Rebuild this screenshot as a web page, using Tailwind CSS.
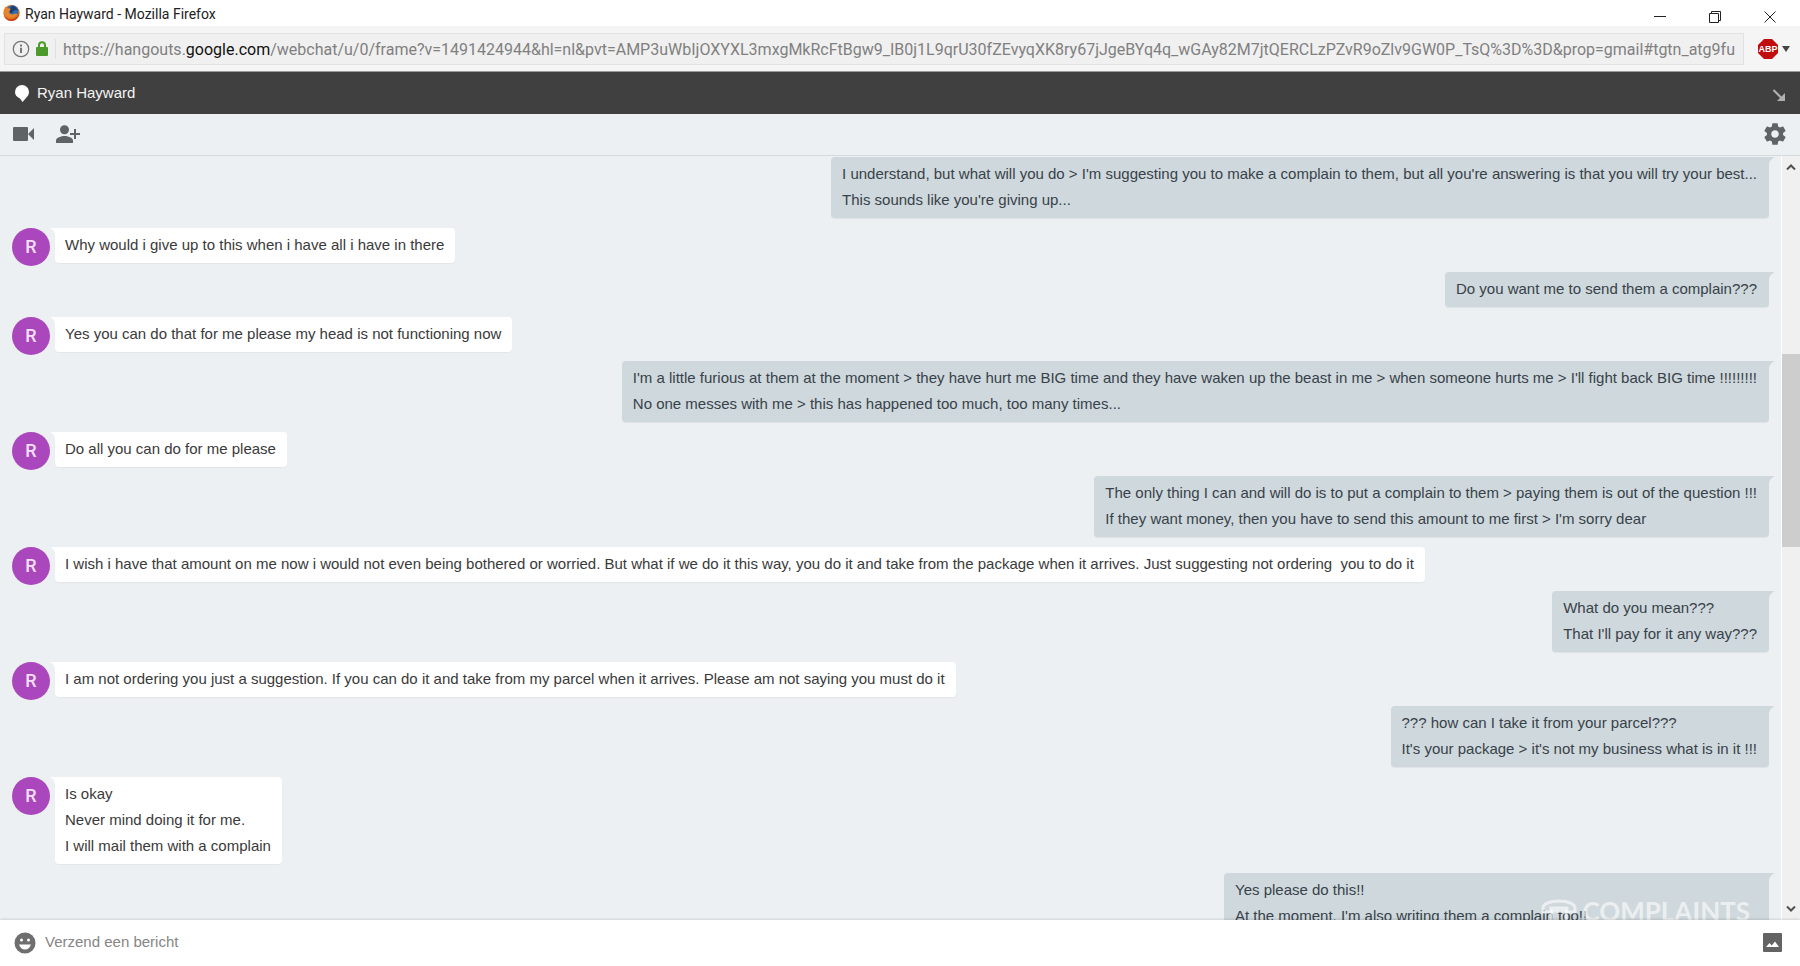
<!DOCTYPE html>
<html lang="nl">
<head>
    <meta charset="UTF-8">
    <meta name="viewport" content="width=device-width, initial-scale=1.0">
    <title>Ryan Hayward</title>
    <script src="https://cdn.jsdelivr.net/npm/@tailwindcss/browser@4"></script>
</head>
<body class="h-screen flex flex-col overflow-hidden bg-white font-['Liberation_Sans',Arial,sans-serif]">
    <!-- Window title bar -->
    <header class="flex h-[26px] shrink-0 items-center justify-between pl-[3px] pr-6 font-['Roboto',sans-serif]">
        <div class="flex items-center gap-[5px]">
            <svg class="h-[18px] w-[17px]" viewBox="0 0 18 18">
                <circle cx="9" cy="9" r="8.6" fill="#e2711d"/>
                <circle cx="10" cy="7.2" r="6.4" fill="#2f6fb0"/>
                <path d="M9 1.5c3.500 0 6 2 6.500 5-1.500-1-3-1-4 0s-1.500 2.500-3 2.500S6 6 9 1.500z" fill="#1c3f73"/>
                <path d="M1 5.500C2 4 2.500 3 2.700 2c1 1 1.600 1.700 2.800 2 1.500 0 2.500.500 2.500 1.200C7.500 6.500 6.500 6.800 6.200 8c.8 2.500 3.800 3.500 6.300 1.800 2-.8 3.500.2 2.300 1.700C12 15.500 3.500 14.500 1.500 10z" fill="#e8842c"/>
                <path d="M17 6c1 5-1.500 10.500-7.500 11.500C5 17.900 2 15 1 12c2.500 3.500 7.500 4.800 11.500 2.500C16 12.500 17.200 9.500 17 6z" fill="#c9431b"/>
            </svg>
            <h1 class="pt-px text-sm leading-4 text-[#222]">Ryan Hayward - Mozilla Firefox</h1>
        </div>
        <div class="flex items-center gap-[43px] pt-2">
            <button type="button" aria-label="Minimaliseren"><svg class="h-3 w-3" viewBox="0 0 12 12"><path d="M0 5.500h12" stroke="#222"/></svg></button>
            <button type="button" aria-label="Herstellen"><svg class="h-3 w-3" viewBox="0 0 12 12" fill="none" stroke="#222"><path d="M.5 2.500h9v9h-9zM2.500 2.500v-2h9v9h-2"/></svg></button>
            <button type="button" aria-label="Sluiten"><svg class="h-3 w-3" viewBox="0 0 12 12"><path d="M.5.500l11 11M11.500.500l-11 11" stroke="#222"/></svg></button>
        </div>
    </header>

    <!-- Address bar -->
    <div class="flex h-[46px] shrink-0 items-center border-b border-[#9a9a9a] bg-[#f5f5f5] pl-1 pr-[10px] font-['Roboto',sans-serif]">
        <div class="flex h-8 min-w-0 flex-1 items-center border border-[#e2e2e2] bg-[#f0f0f0] pl-[7px] pr-1">
            <svg class="h-[18px] w-[18px] shrink-0" viewBox="0 0 18 18" fill="none" stroke="#777">
                <circle cx="9" cy="9" r="7.700" stroke-width="1.300"/>
                <path d="M9 7.700V13" stroke-width="2"/>
                <path d="M9 4.500v2" stroke-width="2"/>
            </svg>
            <svg class="ml-[6px] h-[15px] w-3 shrink-0" viewBox="0 0 12 15">
                <path d="M3 7V4.200a3 3 0 0 1 6 0V7" fill="none" stroke="#4b9a2b" stroke-width="2"/>
                <rect y="6" width="12" height="9" rx="1" fill="#4b9a2b"/>
            </svg>
            <span class="mx-[7px] h-5 w-px shrink-0 bg-[#e0e0e0]"></span>
            <p class="min-w-0 overflow-hidden whitespace-nowrap pt-[2px] text-base leading-6 text-[#808080]">https://hangouts.<span class="text-[#111]">google.com</span>/webchat/u/0/frame?v=1491424944&amp;hl=nl&amp;pvt=AMP3uWbIjOXYXL3mxgMkRcFtBgw9_IB0j1L9qrU30fZEvyqXK8ry67jJgeBYq4q_wGAy82M7jtQERCLzPZvR9oZlv9GW0P_TsQ%3D%3D&amp;prop=gmail#tgtn_atg9fu</p>
        </div>
        <button type="button" class="ml-[14px] flex items-center gap-1" aria-label="Adblock Plus">
            <svg class="h-5 w-5" viewBox="0 0 20 20">
                <path d="M6 0h8l6 6v8l-6 6H6l-6-6V6z" fill="#c10d0d"/>
                <text x="10" y="13" text-anchor="middle" font-size="9" font-weight="700" fill="#fff" font-family="Liberation Sans">ABP</text>
            </svg>
            <svg class="h-[6px] w-2" viewBox="0 0 8 6"><path d="M0 0h8L4 6z" fill="#444"/></svg>
        </button>
    </div>

    <!-- Conversation title -->
    <div class="flex h-[42px] shrink-0 items-center justify-between bg-[#404040] pl-[15px] pr-[15px]">
        <div class="flex items-center gap-2">
            <svg class="h-[17px] w-[14px]" viewBox="0 0 14 17"><path d="M7 0a7 7 0 0 1 7 7c0 3-1.500 4.500-3 6l-3.500 4-2.500-3.500C2 12 0 10.500 0 7a7 7 0 0 1 7-7z" fill="#fff"/></svg>
            <h2 class="text-[15px] leading-5 text-[#f4f4f4]">Ryan Hayward</h2>
        </div>
        <button type="button" class="pt-1" aria-label="Verkleinen">
            <svg class="h-3 w-3" viewBox="0 0 12 12"><path d="M.5 1l8 8" stroke="#b0b0b0" stroke-width="2"/><path d="M12 4v8H4z" fill="#b0b0b0"/></svg>
        </button>
    </div>

    <!-- Toolbar -->
    <div class="flex h-[42px] shrink-0 items-center justify-between border-b border-[#d5dadd] bg-[#ecf0f3] pb-[2px] pl-[13px] pr-[14px] text-[#5f6365]">
        <div class="flex items-center gap-[22px]">
            <button type="button" aria-label="Videogesprek"><svg class="h-[14px] w-[21px]" viewBox="0 0 21 14" fill="currentColor"><path d="M1 0h13a1 1 0 0 1 1 1v12a1 1 0 0 1-1 1H1a1 1 0 0 1-1-1V1a1 1 0 0 1 1-1zM15 7l6-6v12z"/></svg></button>
            <button type="button" aria-label="Personen toevoegen"><svg class="h-[18px] w-6" viewBox="0 0 24 18" fill="currentColor"><circle cx="8.500" cy="4.700" r="4.500"/><path d="M0 18v-2.500C0 12.500 5.500 11 8.500 11s8.500 1.500 8.500 4.500V18zM18 4h2v4h4v2h-4v4h-2v-4h-4V8h4z"/></svg></button>
        </div>
        <button type="button" aria-label="Instellingen">
            <svg class="h-[26px] w-[26px] -mr-[2px]" viewBox="0 0 24 24" fill="currentColor"><path d="M19.430 12.980c.04-.32.07-.64.07-.98s-.03-.66-.07-.98l2.110-1.650c.19-.15.24-.42.12-.64l-2-3.460c-.12-.22-.39-.3-.61-.22l-2.490 1c-.52-.4-1.080-.73-1.690-.98l-.38-2.650C14.460 2.180 14.250 2 14 2h-4c-.25 0-.46.18-.49.42l-.38 2.650c-.61.25-1.170.59-1.690.98l-2.490-1c-.23-.09-.49 0-.61.22l-2 3.460c-.13.22-.07.49.12.64l2.110 1.650c-.04.32-.07.65-.07.98s.03.66.07.98l-2.110 1.650c-.19.15-.24.42-.12.64l2 3.460c.12.22.39.3.61.22l2.490-1c.52.4 1.080.73 1.690.98l.38 2.650c.03.24.24.42.49.42h4c.25 0 .46-.18.49-.42l.38-2.650c.61-.25 1.170-.59 1.690-.98l2.490 1c.23.09.49 0 .61-.22l2-3.460c.12-.22.07-.49-.12-.64l-2.110-1.650zM12 15.500c-1.930 0-3.500-1.570-3.500-3.500s1.570-3.500 3.500-3.500 3.500 1.570 3.500 3.500-1.570 3.500-3.500 3.500z"/></svg>
        </button>
    </div>

    <!-- Conversation -->
    <main class="relative flex min-h-0 flex-1 bg-[#ecf0f3]">
        <div id="messages" class="min-w-0 flex-1 overflow-hidden pl-3 pr-[6px] pt-px text-[15px] leading-[26px]"></div>

        <!-- Scrollbar -->
        <div class="flex w-[19px] shrink-0 flex-col items-center border-l border-white bg-[#f0f0f0]">
            <svg class="mt-2 h-[6px] w-[10px] shrink-0" viewBox="0 0 10 6"><path d="M1 5.500l4-4 4 4" fill="none" stroke="#505050" stroke-width="2"/></svg>
            <div class="flex w-full flex-1 flex-col py-2">
                <div class="grow-[176]"></div>
                <div class="w-full grow-[192] bg-[#cdcdcd]"></div>
                <div class="grow-[350]"></div>
            </div>
            <svg class="mb-2 h-[6px] w-[10px] shrink-0" viewBox="0 0 10 6"><path d="M1 .5l4 4 4-4" fill="none" stroke="#505050" stroke-width="2"/></svg>
        </div>

        <!-- Watermark -->
        <div class="absolute -bottom-[7px] right-[50px] flex items-center gap-[5px] text-white/60">
            <svg class="h-6 w-9" viewBox="0 0 36 24" fill="none" stroke="currentColor" stroke-width="3"><path d="M2 9c0-4 7-7 16-7s16 3 16 7v4h-8V9H10v4H2z"/><path d="M11 12h14v11H11z"/></svg>
            <span class="font-['Lato',sans-serif] text-[26px] font-bold leading-8">COMPLAINTS</span>
        </div>
    </main>

    <!-- Message box -->
    <footer class="relative flex h-[46px] shrink-0 items-center bg-white pb-px pl-[14px] pr-[18px] shadow-[0_-1px_2px_rgba(0,0,0,0.12)]">
        <button type="button" aria-label="Emoji"><svg class="h-[22px] w-[22px]" viewBox="0 0 22 22"><circle cx="11" cy="11" r="10.500" fill="#6e6e6e"/><circle cx="7.500" cy="8" r="1.500" fill="#fff"/><circle cx="14.500" cy="8" r="1.500" fill="#fff"/><path d="M5 12.500h12c-1 3-3.200 5-6 5s-5-2-6-5z" fill="#fff"/></svg></button>
        <input type="text" aria-label="Verzend een bericht" placeholder="Verzend een bericht" class="ml-[9px] min-w-0 flex-1 pb-[2px] text-[15px] leading-6 outline-none placeholder:text-[#858585]">
        <button type="button" aria-label="Foto toevoegen"><svg class="h-[19px] w-[19px]" viewBox="0 0 19 19"><rect width="19" height="19" rx="1" fill="#636363"/><path d="M3 14l3.500-4 2.200 2.500L12 8.500l4 5.500z" fill="#fff"/></svg></button>
    </footer>

    <script>
        const messages = [
            { mine: true, lines: ["I understand, but what will you do > I'm suggesting you to make a complain to them, but all you're answering is that you will try your best...", "This sounds like you're giving up..."] },
            { mine: false, lines: ["Why would i give up to this when i have all i have in there"] },
            { mine: true, lines: ["Do you want me to send them a complain???"] },
            { mine: false, lines: ["Yes you can do that for me please my head is not functioning now"] },
            { mine: true, lines: ["I'm a little furious at them at the moment > they have hurt me BIG time and they have waken up the beast in me > when someone hurts me > I'll fight back BIG time !!!!!!!!!", "No one messes with me > this has happened too much, too many times..."] },
            { mine: false, lines: ["Do all you can do for me please"] },
            { mine: true, lines: ["The only thing I can and will do is to put a complain to them > paying them is out of the question !!!", "If they want money, then you have to send this amount to me first > I'm sorry dear"] },
            { mine: false, lines: ["I wish i have that amount on me now i would not even being bothered or worried. But what if we do it this way, you do it and take from the package when it arrives. Just suggesting not ordering  you to do it"] },
            { mine: true, lines: ["What do you mean???", "That I'll pay for it any way???"] },
            { mine: false, lines: ["I am not ordering you just a suggestion. If you can do it and take from my parcel when it arrives. Please am not saying you must do it"] },
            { mine: true, lines: ["??? how can I take it from your parcel???", "It's your package > it's not my business what is in it !!!"] },
            { mine: false, lines: ["Is okay", "Never mind doing it for me.", "I will mail them with a complain"] },
            { mine: true, width: 'min-w-[545px]', lines: ["Yes please do this!!", "At the moment, I'm also writing them a complain too!!"] }
        ];

        const list = document.getElementById('messages');

        messages.forEach(function(message) {
            const row = document.createElement('div');

            if (message.mine) {
                row.className = 'mb-[10px] flex justify-end';
                row.innerHTML = `
                    <div class="whitespace-pre rounded-l-[4px] rounded-br-[4px] bg-[#cfd8dc] pb-[5px] pl-[11px] pr-3 pt-1 text-[#37424a] shadow-[0_1px_1px_rgba(0,0,0,0.06)] ${message.width || ''}"></div>
                    <svg class="h-2 w-[6px] shrink-0" viewBox="0 0 6 8"><path d="M0 0h6C3 1.500 0 4 0 8z" fill="#cfd8dc"/></svg>
                `;
            } else {
                row.className = 'mb-[9px] flex items-start';
                row.innerHTML = `
                    <div class="-mb-1 flex h-[38px] w-[38px] shrink-0 items-center justify-center rounded-full bg-[#ab47bc] font-['Roboto',sans-serif] text-lg font-medium text-[#f3e0f6]">R</div>
                    <svg class="h-2 w-[5px] shrink-0" viewBox="0 0 5 8"><path d="M5 0H0c3 1.500 5 4 5 8z" fill="#fff"/></svg>
                    <div class="whitespace-pre rounded-r-[4px] rounded-bl-[4px] bg-white pb-[5px] pl-[10px] pr-[11px] pt-1 text-[#3a3a3a] shadow-[0_1px_1px_rgba(0,0,0,0.04)]"></div>
                `;
            }

            row.querySelector('.whitespace-pre').textContent = message.lines.join('\n');
            list.appendChild(row);
        });
    </script>
</body>
</html>
